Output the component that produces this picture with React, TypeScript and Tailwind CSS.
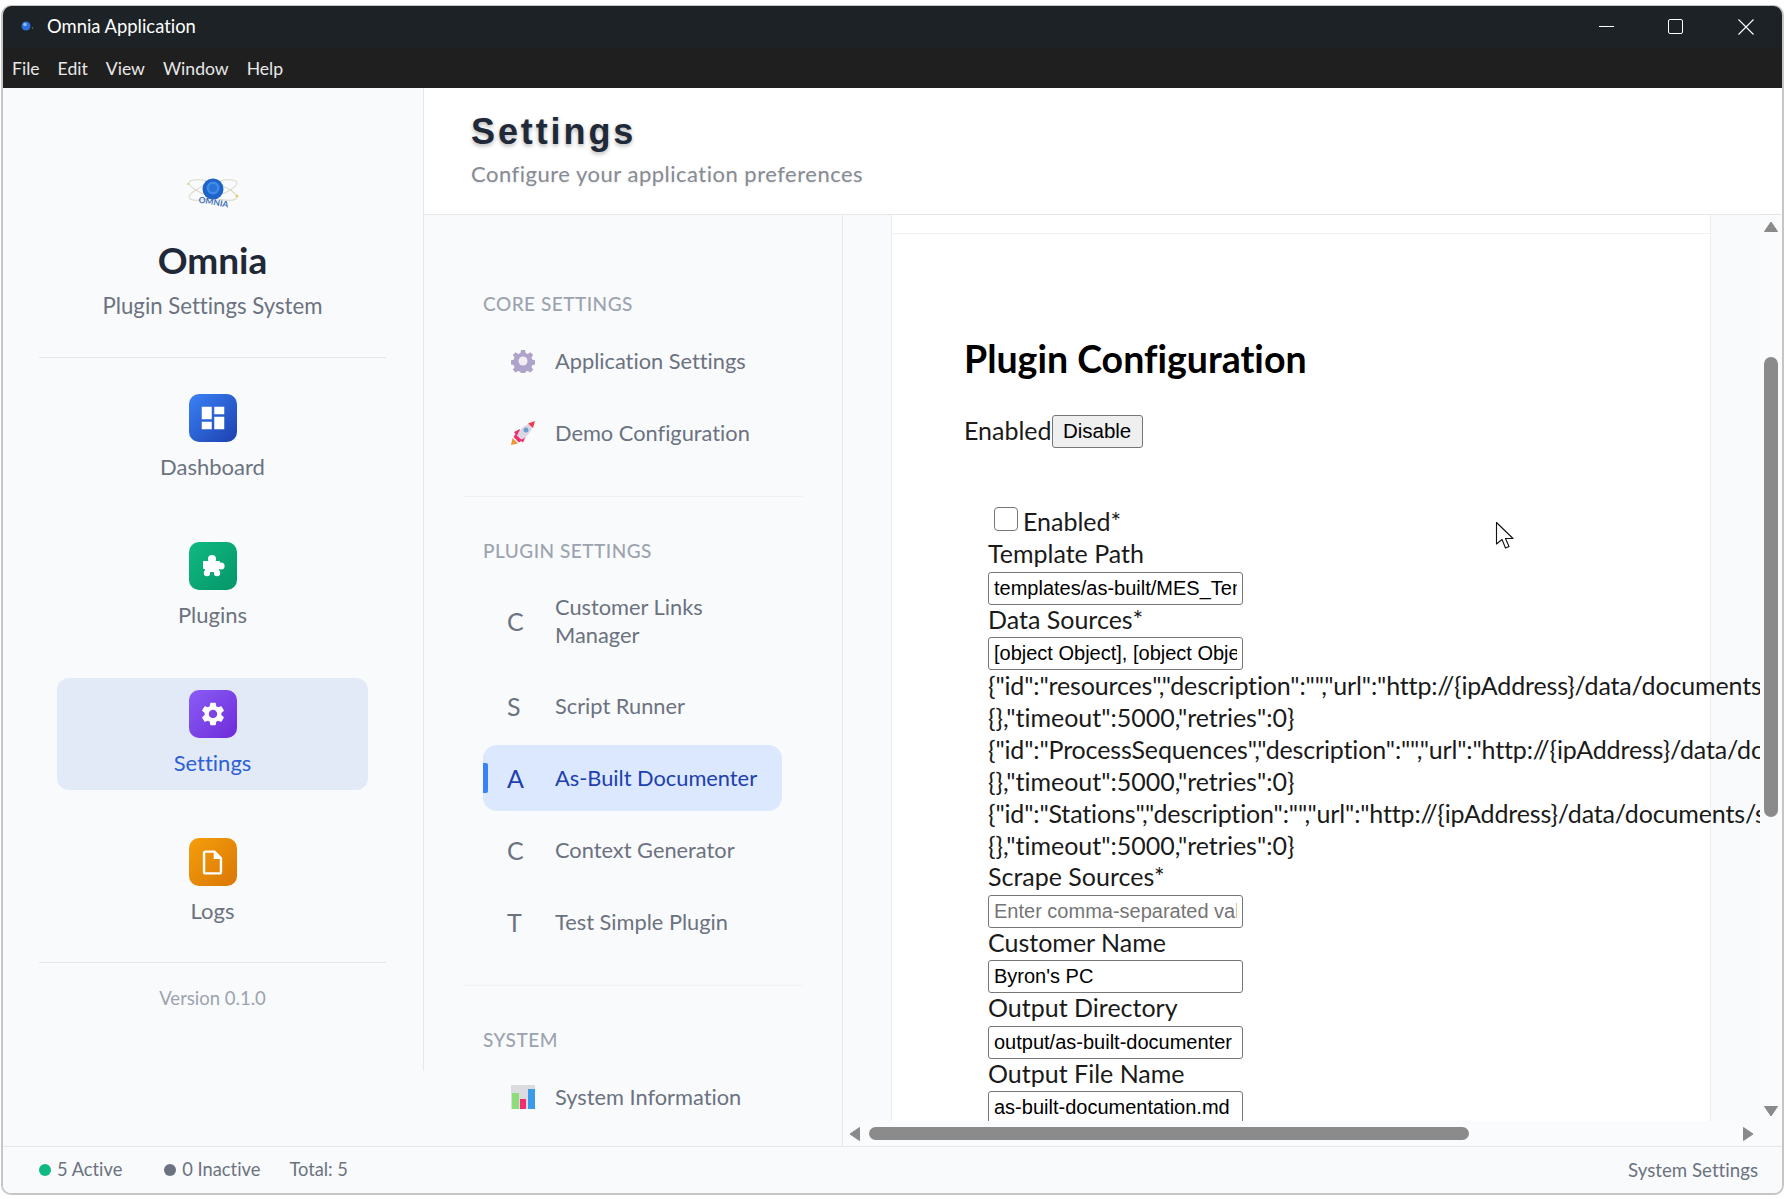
import { MdDashboard, MdSettings, MdOutlineInsertDriveFile } from 'react-icons/md';

const menus = ['File', 'Edit', 'View', 'Window', 'Help'];

function OrbLogo({ small }: { small?: boolean }) {
  if (small) {
    return (
      <svg width="14" height="14" viewBox="0 0 14 14">
        <circle cx="6" cy="6" r="4.5" fill="#2f6fd8" />
        <circle cx="5" cy="4.5" r="1.8" fill="#8db8f0" />
        <circle cx="12.5" cy="8" r="0.7" fill="#777" />
      </svg>
    );
  }
  return (
    <svg width="56" height="34" viewBox="0 0 56 34">
      <ellipse cx="28" cy="15" rx="25" ry="7" fill="none" stroke="#dcd9c8" strokeWidth="1" transform="rotate(18 28 15)" />
      <ellipse cx="28" cy="15" rx="25" ry="7" fill="none" stroke="#dcd9c8" strokeWidth="1" transform="rotate(-18 28 15)" />
      <circle cx="28" cy="14" r="10.5" fill="#1f63c9" />
      <circle cx="28" cy="13" r="6.5" fill="#3f8be8" />
      <circle cx="28" cy="13" r="4" fill="#2a73d6" />
      <text x="28" y="30" textAnchor="middle" fontSize="8.5" fontWeight="700" fill="#3f6fb5" transform="rotate(10 28 30)">OMNIA</text>
      <circle cx="52" cy="21" r="1.5" fill="#e0cf6a" />
      <circle cx="3" cy="9" r="1" fill="#e0cf6a" />
    </svg>
  );
}

function PuzzleIcon() {
  return (
    <svg width="26" height="26" viewBox="0 0 26 26" fill="#fff">
      <circle cx="12" cy="6" r="4" />
      <rect x="3" y="8" width="17" height="8" rx="1" />
      <rect x="5" y="12" width="14" height="7" />
      <circle cx="21" cy="13" r="3.6" />
      <circle cx="7" cy="20" r="3.2" />
      <circle cx="17" cy="20" r="3.2" />
      <circle cx="12" cy="22" r="2.2" fill="#10a37c" />
    </svg>
  );
}

function GearEmoji() {
  return (
    <svg width="24" height="24" viewBox="0 0 24 24" className="ml-[4px]">
      <path
        fill="#b0a3c9"
        d="M10 1h4l.6 3 2.2.9 2.6-1.7 2.8 2.8-1.7 2.6.9 2.2 3 .6v4l-3 .6-.9 2.2 1.7 2.6-2.8 2.8-2.6-1.7-2.2.9-.6 3h-4l-.6-3-2.2-.9-2.6 1.7-2.8-2.8 1.7-2.6-.9-2.2-3-.6v-4l3-.6.9-2.2-1.7-2.6 2.8-2.8 2.6 1.7 2.2-.9z"
      />
      <circle cx="12" cy="12" r="4.5" fill="#f0edf5" />
    </svg>
  );
}

function RocketEmoji() {
  return (
    <svg width="24" height="24" viewBox="0 0 24 24" className="ml-[4px]">
      <path d="M0 24l1.5-7 5.5 5.5z" fill="#f59331" />
      <path d="M9 8L3 11l2.5 3.5 3-1zM15 15l-3 6.5-3.5-2.5 1-3z" fill="#ef2f6e" />
      <path d="M7 18C4 12 12 4 23 1c-2 10-10 20-16 17z" fill="#dcd6e4" />
      <path d="M17 2.6L24 0l-2 7z" fill="#ef3b4d" />
      <path d="M4.5 13l6.5 6.5-3 2-5.500-5.500z" fill="#ef2f6e" />
      <circle cx="15" cy="9" r="2.5" fill="#6f9fd0" />
    </svg>
  );
}

function ChartEmoji() {
  return (
    <svg width="24" height="24" viewBox="0 0 24 24" className="ml-[4px]">
      <rect x="0" y="0" width="24" height="24" rx="1" fill="#dcdce0" />
      <rect x="1" y="8" width="7" height="16" fill="#8fdc7a" />
      <rect x="9" y="14" width="6" height="10" fill="#ef2f6e" />
      <rect x="17" y="4" width="7" height="20" fill="#3a9be8" />
    </svg>
  );
}

function SideItem({
  label,
  icon,
  gradient,
  active,
}: {
  label: string;
  icon: React.ReactNode;
  gradient: string;
  active?: boolean;
}) {
  return (
    <div className={`mx-[54px] flex h-[112px] flex-col items-center rounded-[12px] pt-[12px] ${active ? 'bg-[#e2eaf8]' : ''}`}>
      <div className={`flex h-[48px] w-[48px] items-center justify-center rounded-[10px] text-white ${gradient}`}>{icon}</div>
      <div className={`mt-[10px] h-[30px] text-[22px] leading-[30px] ${active ? 'text-[#2f5fd6]' : 'text-[#6b7280]'}`}>{label}</div>
    </div>
  );
}

function NavRow({
  icon,
  label,
  active,
}: {
  icon: React.ReactNode;
  label: React.ReactNode;
  active?: boolean;
}) {
  return (
    <div className={`relative mb-[6px] flex min-h-[66px] items-center rounded-[14px] py-[18px] pl-[24px] ${active ? 'bg-[#dbe8fd] text-[#1e40af]' : 'text-[#6b7280]'}`}>
      {active && <div className="absolute left-0 top-[18px] h-[30px] w-[5px] rounded-r-[2px] bg-[#3b82f6]" />}
      <div className="w-[48px] shrink-0 text-[25px] leading-[30px]">{icon}</div>
      <div className="text-[21.8px] leading-[28px]">{label}</div>
    </div>
  );
}

function SectionLabel({ children }: { children: string }) {
  return <div className="mb-[13px] h-[22px] text-[19px] font-medium leading-[22px] tracking-[0.5px] text-[#9ca3af]">{children}</div>;
}

function Field({ label, value, placeholder }: { label: string; value?: string; placeholder?: string }) {
  return (
    <>
      <div className="h-[32.5px] leading-[28px]">{label}</div>
      <input
        readOnly
        value={value}
        placeholder={placeholder}
        className="block h-[33px] w-[255px] rounded-[3px] border border-[#767676] bg-white px-[5px] font-['Liberation_Sans',sans-serif] text-[20px] text-black placeholder:text-[#757575]"
      />
    </>
  );
}

function JsonLine({ children, tight }: { children: string; tight?: boolean }) {
  return <div className={`h-[32px] whitespace-nowrap leading-[30px] ${tight ? 'tracking-[-0.15px]' : ''}`}>{children}</div>;
}

export default function App() {
  return (
    <div className="relative h-[1199px] w-[1787px] overflow-hidden bg-white pb-[4px] pl-[1px] pr-[3px] pt-[5px] font-['Lato',sans-serif] [font-variant-ligatures:none]">
      <div className="flex h-full flex-col overflow-hidden rounded-[10px] border-2 border-t-[1px] border-[#c6c6c6]">
        {/* title bar */}
        <div className="flex h-[41px] shrink-0 items-center bg-[#1c2225] pl-[17px] text-white">
          <OrbLogo small />
          <div className="ml-[13px] text-[18.4px]">Omnia Application</div>
          <div className="ml-auto flex items-center">
            <div className="h-[1px] w-[15px] bg-white" />
            <div className="ml-[54px] h-[15px] w-[15px] rounded-[2px] border border-white" />
            <svg width="16" height="16" viewBox="0 0 16 16" className="ml-[55px] mr-[28px]">
              <path d="M0.5 0.5L15.500 15.500M15.500 0.500L0.500 15.500" stroke="#fff" strokeWidth="1.1" />
            </svg>
          </div>
        </div>
        <div className="flex h-[41px] shrink-0 items-center gap-[18px] bg-[#1f1f1f] pl-[9px] pt-[3px] text-[17.6px] text-[#e8e8e8]">
          {menus.map((m) => (
            <span key={m}>{m}</span>
          ))}
        </div>

        <div className="flex min-h-0 flex-1 bg-[#f9fafb]">
          {/* sidebar */}
          <aside className="flex h-[983px] w-[421px] shrink-0 flex-col border-r border-[#e5e7eb] pr-[1px] pt-[87px]">
            <div className="flex h-[34px] justify-center">
              <OrbLogo />
            </div>
            <div className="mt-[29px] h-[44px] text-center text-[37px] font-bold leading-[44px] text-[#1f2937]">Omnia</div>
            <div className="mt-[9px] h-[30px] text-center text-[22.2px] leading-[30px] text-[#6b7280]">Plugin Settings System</div>
            <div className="ml-[36px] mr-[36px] mt-[36px] mb-[24px] border-t border-[#e5e7eb]" />
            <div className="flex flex-col gap-[36px]">
              <SideItem label="Dashboard" icon={<MdDashboard size={30} />} gradient="bg-linear-to-br from-[#3b82f6] to-[#1e40af]" />
              <SideItem label="Plugins" icon={<PuzzleIcon />} gradient="bg-linear-to-br from-[#10b981] to-[#059669]" />
              <SideItem label="Settings" icon={<MdSettings size={28} />} gradient="bg-linear-to-br from-[#8b5cf6] to-[#6d28d9]" active />
              <SideItem label="Logs" icon={<MdOutlineInsertDriveFile size={29} />} gradient="bg-linear-to-br from-[#f59e0b] to-[#d97706]" />
            </div>
            <div className="ml-[36px] mr-[36px] mt-[24px] border-t border-[#e5e7eb]" />
            <div className="mt-[20px] h-[30px] text-center text-[18.5px] leading-[30px] text-[#9ca3af]">Version 0.1.0</div>
          </aside>

          {/* main */}
          <div className="flex min-w-0 flex-1 flex-col">
            <header className="h-[127px] shrink-0 border-b border-[#e5e7eb] bg-white pl-[47px] pt-[21px]">
              <h1 className="h-[46px] font-['Liberation_Sans',sans-serif] text-[36px] font-bold leading-[46px] tracking-[2.9px] text-[#1f2937] [text-shadow:0_2px_4px_rgba(0,0,0,0.3)]">
                Settings
              </h1>
              <p className="mt-[4px] text-[22px] leading-[30px] tracking-[0.5px] text-[#868b94] [text-shadow:0_1px_2px_rgba(0,0,0,0.1)]">
                Configure your application preferences
              </p>
            </header>

            <div className="flex min-h-0 flex-1">
              {/* settings nav */}
              <nav className="w-[419px] shrink-0 overflow-hidden border-r border-[#e5e7eb] pt-[78px]">
                <div className="ml-[59px] mr-[60px]">
                  <SectionLabel>CORE SETTINGS</SectionLabel>
                  <NavRow icon={<GearEmoji />} label="Application Settings" />
                  <NavRow icon={<RocketEmoji />} label="Demo Configuration" />
                </div>
                <div className="mx-[39px] mb-[43px] mt-[30px] border-t border-[#f0f1f3]" />
                <div className="ml-[59px] mr-[60px]">
                  <SectionLabel>PLUGIN SETTINGS</SectionLabel>
                  <NavRow icon="C" label={<>Customer Links<br />Manager</>} />
                  <NavRow icon="S" label="Script Runner" />
                  <NavRow icon="A" label="As-Built Documenter" active />
                  <NavRow icon="C" label="Context Generator" />
                  <NavRow icon="T" label="Test Simple Plugin" />
                </div>
                <div className="mx-[39px] mb-[43px] mt-[30px] border-t border-[#f0f1f3]" />
                <div className="ml-[59px] mr-[60px]">
                  <SectionLabel>SYSTEM</SectionLabel>
                  <NavRow icon={<ChartEmoji />} label="System Information" />
                </div>
              </nav>

              {/* plugin form */}
              <div className="flex min-w-0 flex-1 flex-col">
                <div className="flex min-h-0 flex-1">
                  <div className="min-w-0 flex-1 overflow-hidden pl-[48px]">
                    <div className="h-[1400px] w-[820px] border-x border-[#ececef] bg-white pl-[72px] text-[25px] text-[#1a1a1a]">
                      <div className="-ml-[72px] h-[19px] border-b border-[#f0f1f3]" />
                      <h2 className="mt-[103px] h-[44px] text-[37.500px] font-bold leading-[44px] text-black">Plugin Configuration</h2>
                      <div className="mt-[33px] flex h-[33px] items-center">
                        <span>Enabled</span>
                        <button className="mt-[2px] h-[33px] w-[91px] rounded-[3px] border border-[#767676] bg-[#efefef] font-['Liberation_Sans',sans-serif] text-[20.5px] text-black">
                          Disable
                        </button>
                      </div>
                      <div className="ml-[24px] mt-[60px]">
                        <div className="flex h-[32px] items-start">
                          <input type="checkbox" readOnly className="ml-[6px] h-[24px] w-[24px] appearance-none rounded-[4px] border border-[#767676] bg-white" />
                          <span className="ml-[5px] mt-[-2px] leading-[32px]">Enabled*</span>
                        </div>
                        <Field label="Template Path" value="templates/as-built/MES_Template.docx" />
                        <Field label="Data Sources*" value="[object Object], [object Object], [object Object]" />
                        <JsonLine tight>{'{"id":"resources","description":"","url":"http://{ipAddress}/data/documents/resources/query","method":"GET","headers":'}</JsonLine>
                        <JsonLine>{'{},"timeout":5000,"retries":0}'}</JsonLine>
                        <JsonLine tight>{'{"id":"ProcessSequences","description":"","url":"http://{ipAddress}/data/documents/ProcessSequences","method":"GET","headers":'}</JsonLine>
                        <JsonLine>{'{},"timeout":5000,"retries":0}'}</JsonLine>
                        <JsonLine tight>{'{"id":"Stations","description":"","url":"http://{ipAddress}/data/documents/stations/query","method":"GET","headers":'}</JsonLine>
                        <JsonLine>{'{},"timeout":5000,"retries":0}'}</JsonLine>
                        <Field label="Scrape Sources*" placeholder="Enter comma-separated values" />
                        <Field label="Customer Name" value="Byron's PC" />
                        <Field label="Output Directory" value="output/as-built-documenter" />
                        <Field label="Output File Name" value="as-built-documentation.md" />
                      </div>
                    </div>
                  </div>
                  {/* vertical scrollbar */}
                  <div className="flex w-[22px] shrink-0 flex-col bg-[#fafbfc] pl-[4px]">
                    <svg width="14" height="11" viewBox="0 0 14 11" className="mt-[6px] shrink-0">
                      <path d="M7 1L13.5 10.5H0.5z" fill="#8a8a8a" stroke="#8a8a8a" strokeLinejoin="round" />
                    </svg>
                    <div className="mt-[125px] h-[460px] w-[14px] shrink-0 rounded-[7px] bg-[#8b8b8b]" />
                    <svg width="14" height="11" viewBox="0 0 14 11" className="mt-[289px] shrink-0">
                      <path d="M7 10L13.5 0.5H0.5z" fill="#8a8a8a" stroke="#8a8a8a" strokeLinejoin="round" />
                    </svg>
                  </div>
                </div>
                {/* horizontal scrollbar */}
                <div className="flex h-[25px] shrink-0 items-center bg-[#fafbfc] pl-[6px]">
                  <svg width="11" height="14" viewBox="0 0 11 14" className="shrink-0">
                    <path d="M1 7L10.5 0.5V13.5z" fill="#8a8a8a" stroke="#8a8a8a" strokeLinejoin="round" />
                  </svg>
                  <div className="ml-[9px] h-[13px] w-[600px] shrink-0 rounded-[7px] bg-[#8b8b8b]" />
                  <svg width="11" height="14" viewBox="0 0 11 14" className="ml-[274px] shrink-0">
                    <path d="M10 7L0.5 0.5V13.5z" fill="#8a8a8a" stroke="#8a8a8a" strokeLinejoin="round" />
                  </svg>
                </div>
              </div>
            </div>
          </div>
        </div>

        {/* status bar */}
        <div className="flex h-[47px] shrink-0 items-center border-t border-[#e5e7eb] bg-[#f9fafb] pl-[36px] pr-[24px] text-[18.3px] text-[#6b7280]">
          <span className="h-[12px] w-[12px] rounded-full bg-[#10b981]" />
          <span className="ml-[6px]">5 Active</span>
          <span className="ml-[42px] h-[12px] w-[12px] rounded-full bg-[#6b7280]" />
          <span className="ml-[6px]">0 Inactive</span>
          <span className="ml-[29px]">Total: 5</span>
          <span className="ml-auto text-[18.7px]">System Settings</span>
        </div>
      </div>

      {/* mouse pointer */}
      <svg width="20" height="29" viewBox="0 0 20 29" className="absolute left-[1495px] top-[521px]">
        <path d="M1.5 1.5V23L7 18.5L10.5 27L14 25.5L10.5 17.5H18z" fill="#fff" stroke="#111" strokeWidth="1.1" strokeLinejoin="round" />
      </svg>
    </div>
  );
}
